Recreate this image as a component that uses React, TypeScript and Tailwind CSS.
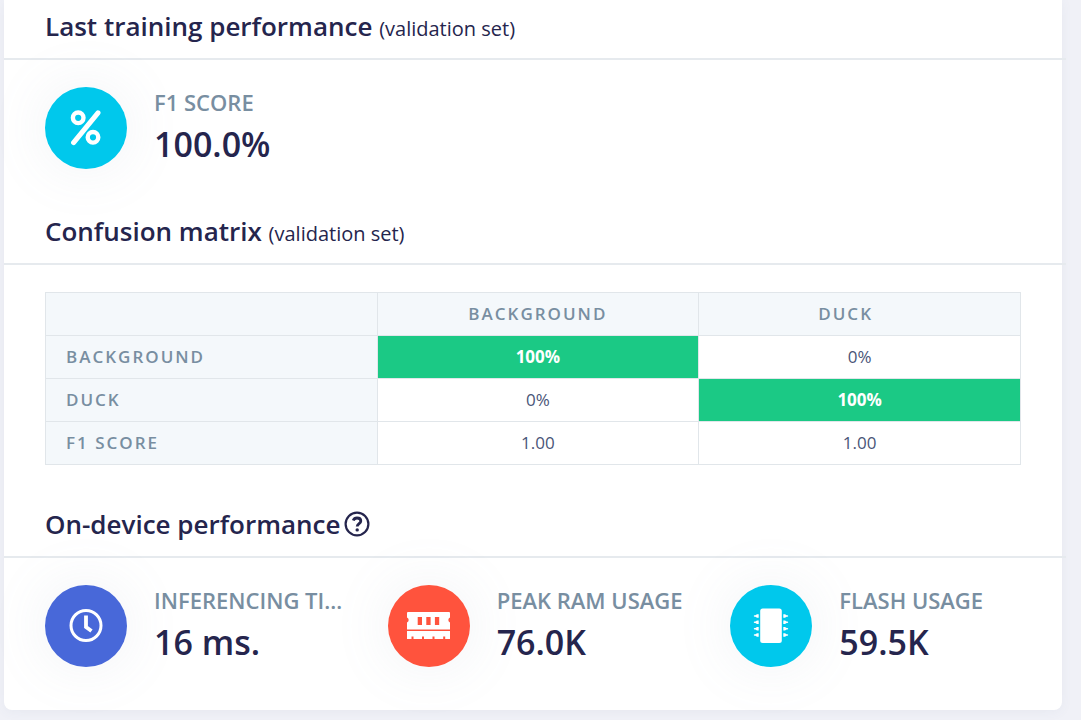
import type { ReactNode } from "react";

function PercentIcon() {
  return (
    <svg viewBox="0 0 32 36" className="w-8 h-9" fill="none" stroke="white" strokeLinecap="round">
      <path d="M3.6 32.6 L28 2.8" strokeWidth="5" />
      <circle cx="8.2" cy="7.8" r="5.3" strokeWidth="4.4" />
      <circle cx="23" cy="27.3" r="5.3" strokeWidth="4.4" />
    </svg>
  );
}

function ClockIcon() {
  return (
    <svg viewBox="0 0 34 34" className="w-[34px] h-[34px]" fill="none" stroke="white">
      <circle cx="17" cy="16.5" r="15" strokeWidth="3" />
      <path d="M17 6.5 V18 L22.5 22" strokeWidth="3.8" />
    </svg>
  );
}

function RamIcon() {
  return (
    <svg viewBox="0 0 44 28" className="w-11 h-7">
      <path
        fill="white"
        d="M2 0 H42 Q43 0 43 1 V5.5 A2.7 2.7 0 0 0 43 10.5 V17.5 H0 V10.5 A2.7 2.7 0 0 0 0 5.5 V1 Q0 0 1 0 Z"
      />
      <path
        fill="white"
        d="M0 19 H43 V27 H38.2 V24.5 H36.2 V27 H27.5 V24.5 H25.5 V27 H17 V24.5 H15 V27 H6.5 V24.5 H4.5 V27 H0 Z"
      />
      <path fill="#ff533d" d="M10.7 5 H15 V13 H10.7 Z M19.3 5 H23.6 V13 H19.3 Z M27.9 5 H32.2 V13 H27.9 Z" />
    </svg>
  );
}

function ChipIcon() {
  const pins = [8, 14.3, 20.7, 27];
  return (
    <svg viewBox="0 0 36 36" className="w-9 h-9" fill="white">
      <rect x="7.2" y="0.5" width="21.6" height="34.5" rx="2.5" />
      {pins.map((y) => (
        <g key={y}>
          <path d={`M5.7 ${y - 1.8} V${y + 1.8} H4 L2.4 ${y + 0.8} H1.6 A0.8 0.8 0 0 1 1.6 ${y - 0.8} H2.4 L4 ${y - 1.8} Z`} />
          <path d={`M30.3 ${y - 1.8} V${y + 1.8} H32 L33.6 ${y + 0.8} H34.4 A0.8 0.8 0 0 0 34.4 ${y - 0.8} H33.6 L32 ${y - 1.8} Z`} />
        </g>
      ))}
    </svg>
  );
}

function HelpIcon() {
  return (
    <svg viewBox="0 0 26 26" className="w-[26px] h-[26px]" fill="none" stroke="#25254d">
      <circle cx="13" cy="13" r="11.4" strokeWidth="2.2" />
      <path d="M9.2 9.6 C10 7.6 11.4 7 13 7 C15.4 7 16.8 8.3 16.8 10 C16.8 12.6 13.2 12.6 13.2 15.6" strokeWidth="2.8" />
      <circle cx="13.2" cy="18.9" r="1.7" fill="#25254d" stroke="none" />
    </svg>
  );
}

function SectionTitle({ title, note, children }: { title: string; note?: string; children?: ReactNode }) {
  return (
    <div className="-mr-1 flex items-center gap-1 border-b-2 border-[#e6eaee] px-[41px] pb-3">
      <h2 className="text-[26px] leading-10 font-semibold">
        {title} {note && <small className="text-xl font-normal">{note}</small>}
      </h2>
      {children}
    </div>
  );
}

function Metric({ label, value, color, icon }: { label: string; value: string; color: string; icon: ReactNode }) {
  return (
    <div className="flex h-[82px] items-center gap-[27px] min-w-0">
      <div
        className={`flex h-[82px] w-[82px] shrink-0 items-center justify-center rounded-full shadow-[0_0_60px_rgba(130,150,170,0.12)] ${color}`}
      >
        {icon}
      </div>
      <div className="min-w-0">
        <div className="truncate text-[22px] leading-8 font-semibold text-[#788ea1]">{label}</div>
        <div className="text-[34px] leading-[52px] font-semibold">{value}</div>
      </div>
    </div>
  );
}

const classes = ["BACKGROUND", "DUCK"];
const rows = [
  { label: "BACKGROUND", cells: ["100%", "0%"] },
  { label: "DUCK", cells: ["0%", "100%"] },
  { label: "F1 SCORE", cells: ["1.00", "1.00"] },
];

const headCell = "border border-[#e1e6ea] bg-[#f4f8fb] font-semibold tracking-[2px] text-[#788ea1]";

export default function App() {
  return (
    <div className="min-h-screen bg-[#f0f1f7] pl-1 pr-[19px] pb-[10px] font-['Open_Sans',sans-serif] text-[#25254d]">
      <main className="rounded-b-lg bg-white pt-[6px] pb-[43px] shadow-[0_2px_12px_rgba(90,100,140,0.06)]">
        <section>
          <SectionTitle title="Last training performance" note="(validation set)" />
          <div className="px-[41px] pt-[27px]">
            <Metric label="F1 SCORE" value="100.0%" color="bg-[#00c8ec]" icon={<PercentIcon />} />
          </div>
        </section>

        <section className="mt-[42px]">
          <SectionTitle title="Confusion matrix" note="(validation set)" />
          <div className="px-[41px] pt-[27px]">
            <table className="w-full table-fixed border-collapse text-[17px] leading-6">
              <thead>
                <tr className="h-[43px]">
                  <th className={`${headCell} w-[34%]`}></th>
                  {classes.map((name) => (
                    <th key={name} className={`${headCell} last:pr-7`}>{name}</th>
                  ))}
                </tr>
              </thead>
              <tbody>
                {rows.map((row) => (
                  <tr key={row.label} className="h-[43px]">
                    <th className={`${headCell} pl-5 text-left`}>{row.label}</th>
                    {row.cells.map((cell, i) => (
                      <td
                        key={i}
                        className={`border border-[#e1e6ea] text-center ${
                          cell === "100%" ? "bg-[#1bc985] font-bold text-white" : "text-[#4a5578]"
                        }`}
                      >
                        {cell}
                      </td>
                    ))}
                  </tr>
                ))}
              </tbody>
            </table>
          </div>
        </section>

        <section className="mt-[39px]">
          <SectionTitle title="On-device performance">
            <button type="button" aria-label="Help">
              <HelpIcon />
            </button>
          </SectionTitle>
          <div className="-mr-3 grid grid-cols-3 gap-10 px-[41px] pt-[27px]">
            <Metric label="INFERENCING TIME" value="16 ms." color="bg-[#4868d9]" icon={<ClockIcon />} />
            <Metric label="PEAK RAM USAGE" value="76.0K" color="bg-[#ff533d]" icon={<RamIcon />} />
            <Metric label="FLASH USAGE" value="59.5K" color="bg-[#00c8ec]" icon={<ChipIcon />} />
          </div>
        </section>
      </main>
    </div>
  );
}
